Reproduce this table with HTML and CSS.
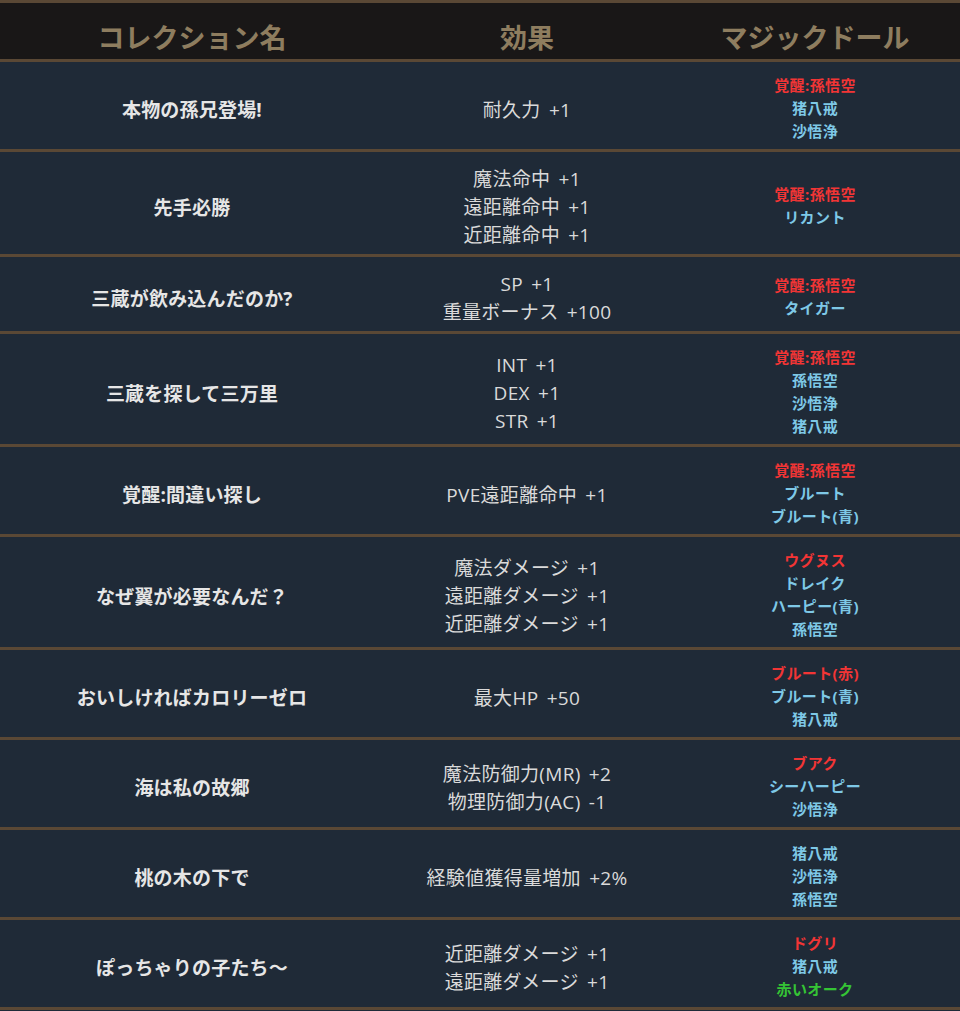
FILE: index.html
```html
<!DOCTYPE html>
<html lang="ja">
<head>
<meta charset="utf-8">
<link rel="stylesheet" href="styles.css">
</head>
<body>
<div class="coll">
  <div class="row head">
    <div class="hcell">コレクション名</div><div class="hcell">効果</div><div class="hcell">マジックドール</div>
  </div>
  <div class="row">
    <div class="name">本物の孫兄登場!</div>
    <div class="eff"><div>耐久力 +1</div></div>
    <div class="doll"><div class="r">覚醒:孫悟空</div><div class="b">猪八戒</div><div class="b">沙悟浄</div></div>
  </div>
  <div class="row">
    <div class="name">先手必勝</div>
    <div class="eff"><div>魔法命中 +1</div><div>遠距離命中 +1</div><div>近距離命中 +1</div></div>
    <div class="doll"><div class="r">覚醒:孫悟空</div><div class="b">リカント</div></div>
  </div>
  <div class="row">
    <div class="name">三蔵が飲み込んだのか?</div>
    <div class="eff"><div>SP +1</div><div>重量ボーナス +100</div></div>
    <div class="doll"><div class="r">覚醒:孫悟空</div><div class="b">タイガー</div></div>
  </div>
  <div class="row">
    <div class="name">三蔵を探して三万里</div>
    <div class="eff"><div>INT +1</div><div>DEX +1</div><div>STR +1</div></div>
    <div class="doll"><div class="r">覚醒:孫悟空</div><div class="b">孫悟空</div><div class="b">沙悟浄</div><div class="b">猪八戒</div></div>
  </div>
  <div class="row">
    <div class="name">覚醒:間違い探し</div>
    <div class="eff"><div>PVE遠距離命中 +1</div></div>
    <div class="doll"><div class="r">覚醒:孫悟空</div><div class="b">ブルート</div><div class="b">ブルート(青)</div></div>
  </div>
  <div class="row">
    <div class="name">なぜ翼が必要なんだ？</div>
    <div class="eff"><div>魔法ダメージ +1</div><div>遠距離ダメージ +1</div><div>近距離ダメージ +1</div></div>
    <div class="doll"><div class="r">ウグヌス</div><div class="b">ドレイク</div><div class="b">ハーピー(青)</div><div class="b">孫悟空</div></div>
  </div>
  <div class="row">
    <div class="name">おいしければカロリーゼロ</div>
    <div class="eff"><div>最大HP +50</div></div>
    <div class="doll"><div class="r">ブルート(赤)</div><div class="b">ブルート(青)</div><div class="b">猪八戒</div></div>
  </div>
  <div class="row">
    <div class="name">海は私の故郷</div>
    <div class="eff"><div>魔法防御力(MR) +2</div><div>物理防御力(AC) -1</div></div>
    <div class="doll"><div class="r">ブアク</div><div class="b">シーハーピー</div><div class="b">沙悟浄</div></div>
  </div>
  <div class="row">
    <div class="name">桃の木の下で</div>
    <div class="eff"><div>経験値獲得量増加 +2%</div></div>
    <div class="doll"><div class="b">猪八戒</div><div class="b">沙悟浄</div><div class="b">孫悟空</div></div>
  </div>
  <div class="row">
    <div class="name">ぽっちゃりの子たち～</div>
    <div class="eff"><div>近距離ダメージ +1</div><div>遠距離ダメージ +1</div></div>
    <div class="doll"><div class="r">ドグリ</div><div class="b">猪八戒</div><div class="g">赤いオーク</div></div>
  </div>
</div>
</body>
</html>
```

FILE: styles.css
```css
html, body {
  margin: 0;
  padding: 0;
  background: #1f2a37;
}
body {
  width: 960px;
  font-family: "Open Sans", "Noto Sans CJK JP", sans-serif;
}
.coll {
  width: 960px;
  display: flex;
  flex-direction: column;
}
.row {
  display: grid;
  grid-template-columns: 384px 286px 290px;
  align-items: center;
  text-align: center;
  background: #1f2a37;
  border-bottom: 3px solid #5a4835;
}
.head {
  background: #191717;
  border-top: 3px solid #5a4835;
  height: 56px;
}
.hcell {
  color: #8e7d5f;
  font-family: "Noto Sans CJK JP", sans-serif;
  font-size: 27px;
  font-weight: 700;
  line-height: 32px;
  padding-top: 12px;
}
.name {
  color: #e6e6e6;
  font-size: 19px;
  font-weight: 700;
  line-height: 26px;
  padding-top: 9px;
  letter-spacing: 0.2px;
}
.eff {
  color: #dadada;
  font-size: 19px;
  line-height: 28px;
  word-spacing: 3px;
  letter-spacing: 0.3px;
  padding: 13px 0 5px;
}
.doll {
  font-size: 15px;
  font-weight: 700;
  line-height: 23px;
  letter-spacing: 0.4px;
  padding: 12px 0 6px;
}
.r { color: #f23535; }
.b { color: #7ec8e6; }
.g { color: #35c435; }
```
